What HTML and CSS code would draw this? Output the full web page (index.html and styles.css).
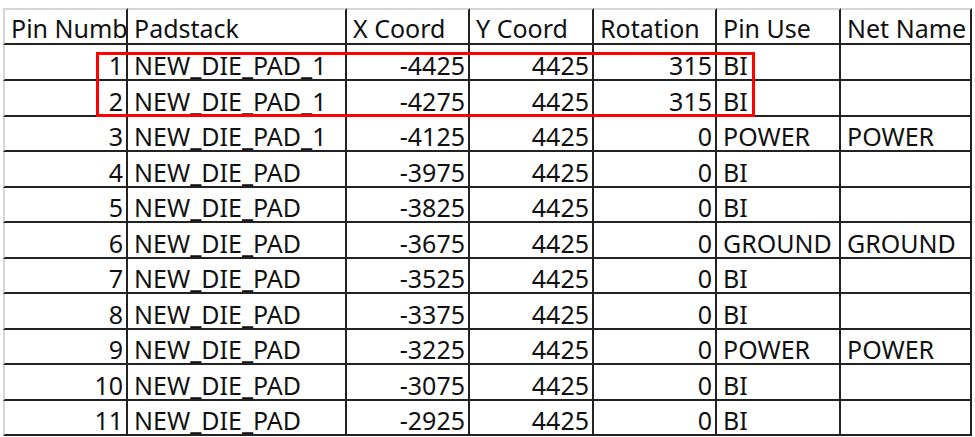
FILE: index.html
```html
<!DOCTYPE html>
<html lang="en">
<head>
  <meta charset="UTF-8">
  <title>Pin Table</title>
  <link rel="stylesheet" href="styles.css">
</head>
<body>

  <div class="sheet">
    <div class="grid">
      <div class="cell head first">Pin Numb</div>
      <div class="cell head">Padstack</div>
      <div class="cell head">X Coord</div>
      <div class="cell head">Y Coord</div>
      <div class="cell head">Rotation</div>
      <div class="cell head">Pin Use</div>
      <div class="cell head">Net Name</div>

      <div class="cell num first">1</div><div class="cell">NEW_DIE_PAD_1</div><div class="cell num">-4425</div><div class="cell num">4425</div><div class="cell num">315</div><div class="cell">BI</div><div class="cell"></div>
      <div class="cell num first">2</div><div class="cell">NEW_DIE_PAD_1</div><div class="cell num">-4275</div><div class="cell num">4425</div><div class="cell num">315</div><div class="cell">BI</div><div class="cell"></div>
      <div class="cell num first">3</div><div class="cell">NEW_DIE_PAD_1</div><div class="cell num">-4125</div><div class="cell num">4425</div><div class="cell num">0</div><div class="cell">POWER</div><div class="cell">POWER</div>
      <div class="cell num first">4</div><div class="cell">NEW_DIE_PAD</div><div class="cell num">-3975</div><div class="cell num">4425</div><div class="cell num">0</div><div class="cell">BI</div><div class="cell"></div>
      <div class="cell num first">5</div><div class="cell">NEW_DIE_PAD</div><div class="cell num">-3825</div><div class="cell num">4425</div><div class="cell num">0</div><div class="cell">BI</div><div class="cell"></div>
      <div class="cell num first">6</div><div class="cell">NEW_DIE_PAD</div><div class="cell num">-3675</div><div class="cell num">4425</div><div class="cell num">0</div><div class="cell">GROUND</div><div class="cell">GROUND</div>
      <div class="cell num first">7</div><div class="cell">NEW_DIE_PAD</div><div class="cell num">-3525</div><div class="cell num">4425</div><div class="cell num">0</div><div class="cell">BI</div><div class="cell"></div>
      <div class="cell num first">8</div><div class="cell">NEW_DIE_PAD</div><div class="cell num">-3375</div><div class="cell num">4425</div><div class="cell num">0</div><div class="cell">BI</div><div class="cell"></div>
      <div class="cell num first">9</div><div class="cell">NEW_DIE_PAD</div><div class="cell num">-3225</div><div class="cell num">4425</div><div class="cell num">0</div><div class="cell">POWER</div><div class="cell">POWER</div>
      <div class="cell num first">10</div><div class="cell">NEW_DIE_PAD</div><div class="cell num">-3075</div><div class="cell num">4425</div><div class="cell num">0</div><div class="cell">BI</div><div class="cell"></div>
      <div class="cell num first">11</div><div class="cell">NEW_DIE_PAD</div><div class="cell num">-2925</div><div class="cell num">4425</div><div class="cell num">0</div><div class="cell">BI</div><div class="cell"></div>
    </div>

    <!-- highlight around pins 1 and 2 -->
    <div class="mark"></div>
  </div>

</body>
</html>
```

FILE: styles.css
```css
html, body {
  margin: 0;
  background: #fff;
}

.sheet {
  position: relative;
  padding: 8px 0 0 3px;
  font-family: "Noto Sans", sans-serif;
  font-size: 25px;
  color: #111;
}

.grid {
  display: grid;
  grid-template-columns: 125px 219px 123px 124px 123px 124px 131px;
  grid-template-rows: 37px 36px 36px 35px 36px 35px 36px 35px 36px 35px 36px 35px;
}

.cell {
  box-sizing: border-box;
  border-right: 2px solid #222;
  border-bottom: 2px solid #222;
  display: flex;
  align-items: flex-end;
  padding: 0 3px 1px 6px;
  line-height: 25px;
  white-space: nowrap;
  overflow: hidden;
}

.cell.first {
  border-left: 2px solid #d6d6d6;
}

.cell.head {
  border-top: 2px solid #d6d6d6;
  padding-bottom: 2px;
}

.cell.num {
  justify-content: flex-end;
}

.mark {
  position: absolute;
  left: 96px;
  top: 52px;
  width: 659px;
  height: 65px;
  box-sizing: border-box;
  border: 3px solid #f00;
}
```
